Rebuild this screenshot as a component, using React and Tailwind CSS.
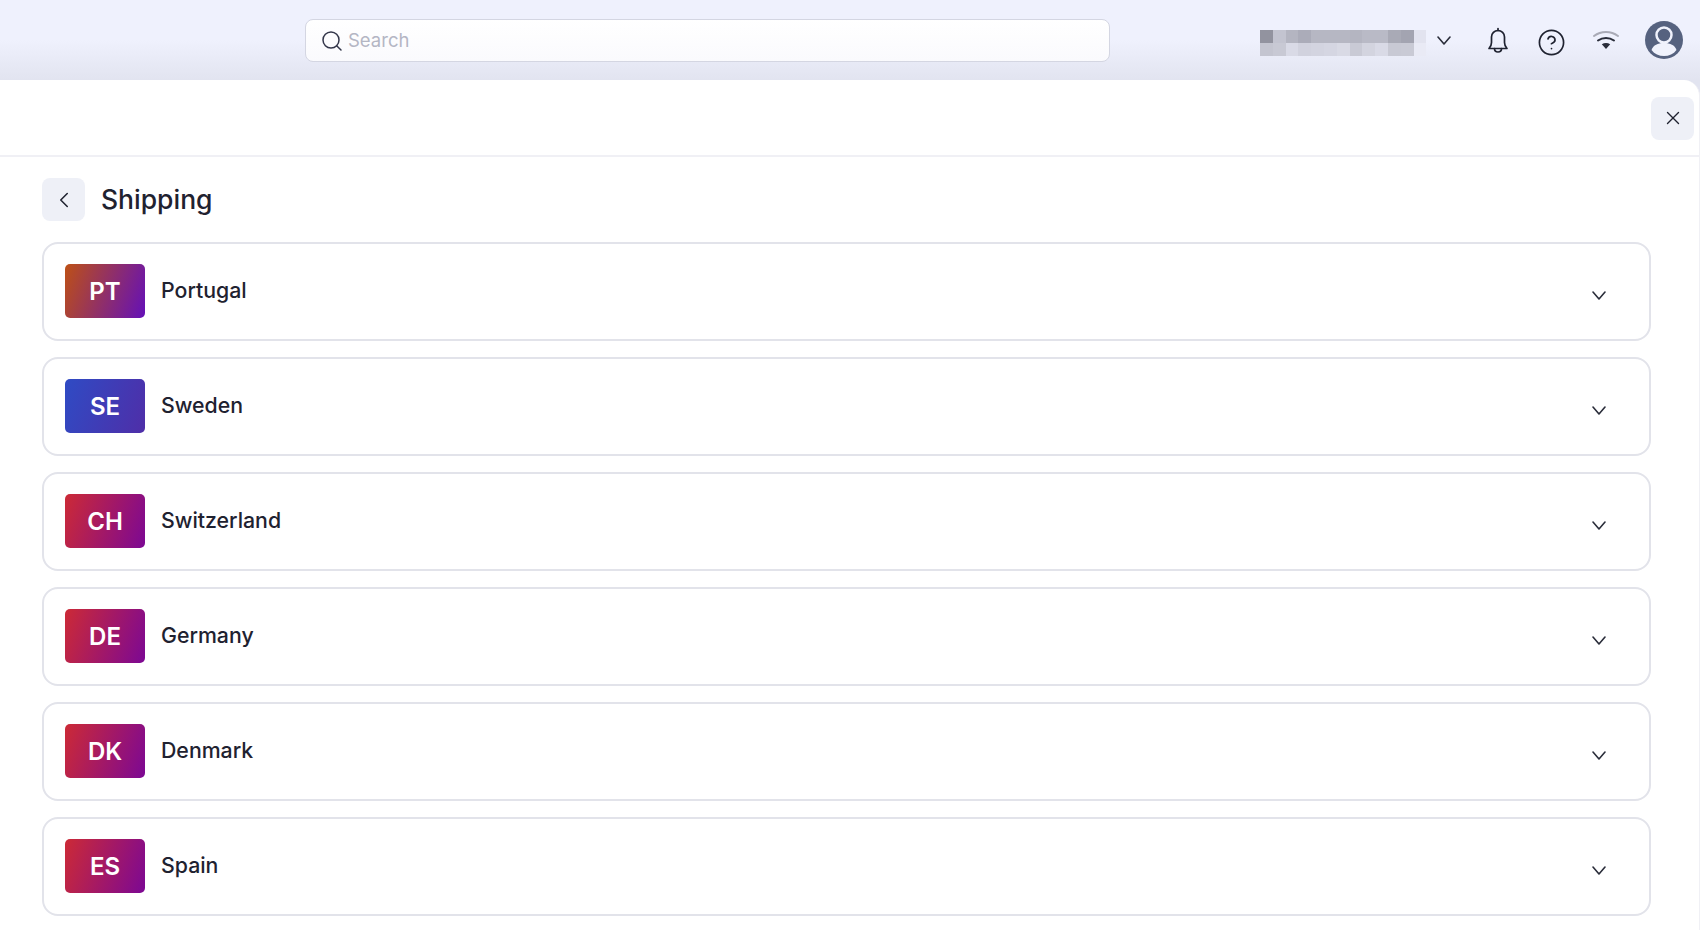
import { ChevronLeft, X, Search, CircleHelp } from 'lucide-react'

const countries = [
  { code: 'PT', name: 'Portugal', color: 'from-[#bd5016] to-[#6410b8]' },
  { code: 'SE', name: 'Sweden', color: 'from-[#2f4bc4] to-[#4f2ea8]' },
  { code: 'CH', name: 'Switzerland', color: 'from-[#cc2a36] to-[#7c0894]' },
  { code: 'DE', name: 'Germany', color: 'from-[#cc2a36] to-[#7c0894]' },
  { code: 'DK', name: 'Denmark', color: 'from-[#cc2a36] to-[#7c0894]' },
  { code: 'ES', name: 'Spain', color: 'from-[#cc2a36] to-[#7c0894]' },
]

// pixelated account name
const blurRows = [
  ['#92939f', '#c3c4d0', '#b4b5c1', '#abacb9', '#b6b7c3', '#b6b7c3', '#b6b7c3', '#b4b5c1', '#b9bac6', '#b9bac6', '#a9aab6', '#a3a4b1', '#e2e3ef'],
  ['#c4c5d0', '#c8c9d4', '#d9dae6', '#d1d2de', '#d3d4e0', '#d5d6e2', '#d9dae5', '#c9cad5', '#d3d4df', '#d9dae6', '#c8c9d4', '#c9cad5', '#e9eaf5'],
]

function Chevron({ className }) {
  return (
    <svg width="14" height="9" viewBox="0 0 14 9" fill="none" stroke="#2a2d3a" strokeWidth="1.6" strokeLinecap="round" strokeLinejoin="round" className={className}>
      <path d="M1 1l6 7 6-7" />
    </svg>
  )
}

function Bell() {
  return (
    <svg width="28" height="28" viewBox="0 0 28 28" fill="none" stroke="#1f2230" strokeWidth="1.7" strokeLinecap="round" strokeLinejoin="round">
      <path d="M14 1.500v2" />
      <path d="M5 21.500c1.600-1.600 2.500-3 2.500-6V10a6.500 6.500 0 0 1 13 0v5.500c0 3 .9 4.400 2.500 6z" />
      <path d="M10.500 21.500c0 2 1.500 3.500 3.500 3.500s3.500-1.500 3.500-3.500" />
    </svg>
  )
}

function Wifi() {
  return (
    <svg width="26" height="20" viewBox="0 0 26 20" fill="none" strokeLinecap="round">
      <path d="M1 6c7.200-5.300 16.800-5.300 24 0" stroke="#a9aab6" strokeWidth="2" />
      <path d="M5 10.500c4.800-3.500 11.200-3.500 16 0" stroke="#2a2d3a" strokeWidth="2" />
      <path d="M8.800 14.200l4.200 4.800 4.200-4.800c-2.600-1.500-5.800-1.500-8.400 0z" fill="#2a2d3a" />
    </svg>
  )
}

function Avatar() {
  return (
    <svg width="38" height="38" viewBox="0 0 38 38">
      <circle cx="19" cy="19" r="19" fill="#56627f" />
      <circle cx="19" cy="14" r="7.500" fill="#56627f" stroke="#f0f2fc" strokeWidth="2.500" />
      <path d="M6.500 29c2-5 6-7 12.500-7s10.500 2 12.500 7c-3 4-7.500 6-12.500 6s-9.500-2-12.500-6z" fill="#f0f2fc" />
    </svg>
  )
}

export default function App() {
  return (
    <div className="h-[930px] overflow-hidden bg-[#e2e4f0] font-['Inter',sans-serif] text-[#1f2230]">
      {/* Top bar */}
      <header className="h-[80px] flex items-center pl-[305px] bg-gradient-to-b from-[#eff1fd] from-50% to-[#e2e4f0]">
        <div className="w-[805px] h-[43px] mt-[1px] flex items-center pl-[14px] gap-[4px] rounded-[8px] border border-[#d4d6e2] bg-gradient-to-b from-white to-[#fafafd]">
          <Search size={24} strokeWidth={1.5} className="text-[#33364a]" />
          <span className="text-[18.500px] text-[#b4b6c4]">Search</span>
        </div>

        <div className="ml-[150px] mt-[6px] flex flex-col">
          {blurRows.map((row, i) => (
            <div key={i} className="flex">
              {row.map((c, j) => (
                <div key={j} className="w-[12.800px] h-[13px]" style={{ background: c }} />
              ))}
            </div>
          ))}
        </div>

        <Chevron className="ml-[11px]" />
        <div className="ml-[33px] mt-[2px]"><Bell /></div>
        <CircleHelp size={29} strokeWidth={1.4} className="ml-[25px] mt-[4px]" />
        <div className="ml-[27px]"><Wifi /></div>
        <div className="ml-[26px]"><Avatar /></div>
      </header>

      {/* Panel */}
      <main className="h-[850px] bg-white rounded-tr-[16px] border-r border-[#f0f0f5]">
        <div className="h-[77px] flex items-center justify-end pr-[5px] pt-[1px] border-b-2 border-[#f0f0f5]">
          <button className="w-[43px] h-[43px] flex items-center justify-center rounded-[8px] bg-[#eef0f7]">
            <X size={22} strokeWidth={1.5} />
          </button>
        </div>

        <div className="pl-[42px] pr-[48px] pt-[21px]">
          <div className="flex items-center gap-[16px]">
            <button className="w-[43px] h-[43px] flex items-center justify-center rounded-[8px] bg-[#eef0f7]">
              <ChevronLeft size={26} strokeWidth={1.4} />
            </button>
            <h1 className="pt-[1px] text-[26.500px] font-medium">Shipping</h1>
          </div>

          <div className="mt-[21px] flex flex-col gap-[16px]">
            {countries.map(c => (
              <div key={c.code} className="h-[99px] flex items-center pl-[21px] pr-[43px] rounded-[16px] border-2 border-[#e2e3ea]">
                <div className={`w-[80px] h-[54px] mb-[2px] pt-[2px] flex items-center justify-center rounded-[5px] bg-linear-110/srgb ${c.color} text-white text-[24px] font-semibold`}>
                  {c.code}
                </div>
                <span className="ml-[16px] mb-[2px] text-[21.300px] font-medium">{c.name}</span>
                <Chevron className="ml-auto mt-[8px]" />
              </div>
            ))}
          </div>
        </div>
      </main>
    </div>
  )
}
